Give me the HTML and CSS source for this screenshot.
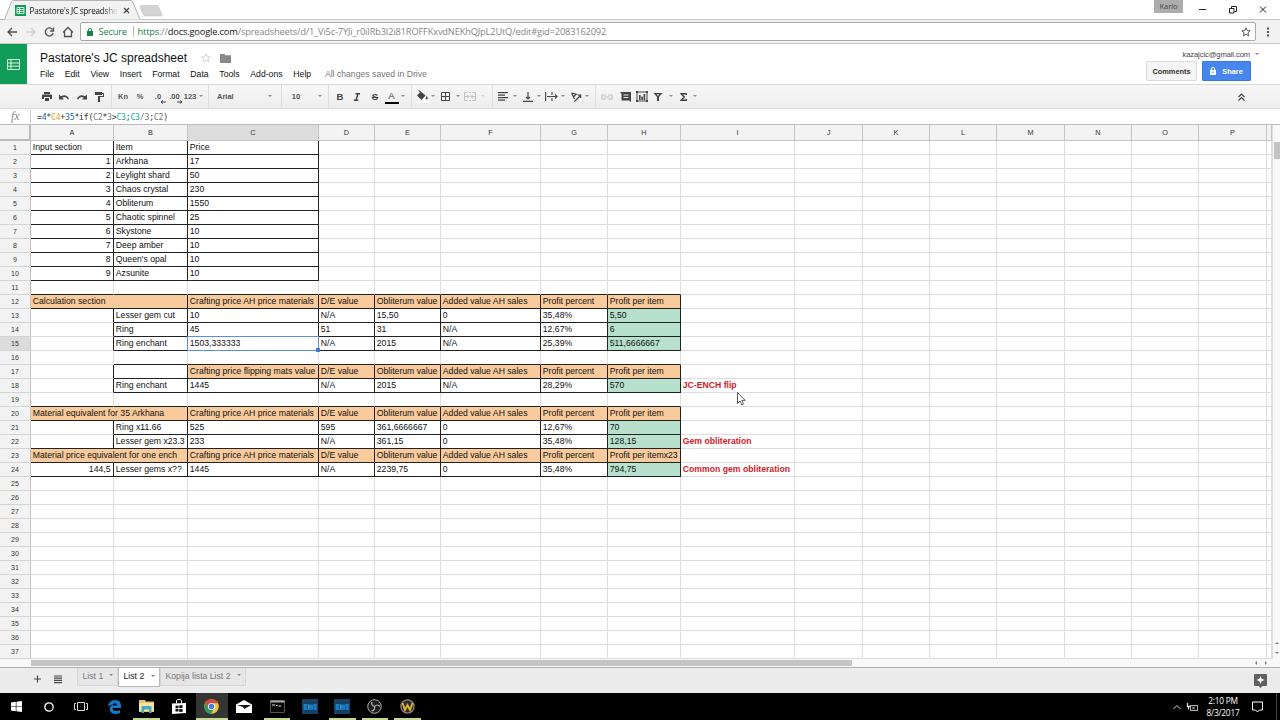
FILE: index.html
```html
<!DOCTYPE html>
<html lang="en">
<head>
<meta charset="utf-8">
<title>Pastatore's JC spreadsheet</title>
<link rel="stylesheet" href="styles.css">
</head>
<body>
<div class="screen">
  <header class="tabstrip">
    <svg class="tabshape" width="164" height="20" viewBox="0 0 164 20"><path d="M0 19.5H4.5L11.5 1.5Q12 .5 13.500 .5H130Q132 .5 132.500 1.500L140 19.500" fill="#f2f2f2" stroke="#b4b4b4"/><path d="M141 5.500h16q1 0 1.500 1l3.500 8q0 1.500-1 1.500h-15.500q-1.500 0-2-1l-3.500-8q0-1.500 1-1.500z" fill="#d2d2d2" stroke="#c6c6c6" stroke-width=".6"/></svg>
    <svg class="favicon" width="11" height="11" viewBox="0 0 11 11"><path fill="#119d57" d="M0 0h11v11H0z"/><path d="M2 2.500h7v6H2zM4.500 2.500v6M2 4.500h7M2 6.500h7" fill="none" stroke="#fff" stroke-width=".8"/></svg>
    <span class="tabtitle">Pastatore's JC spreadshe</span>
    <svg class="tabclose" width="7" height="7" viewBox="0 0 7 7"><path d="M1 1l5 5M6 1l-5 5" stroke="#444" stroke-width="1.200"/></svg>
    <span class="profile">Karlo</span>
    <svg class="winctl" width="80" height="12" viewBox="0 0 80 12"><g fill="none" stroke="#222"><path d="M4 6.500h7"/><path d="M34.500 5.500h4.500v4.500h-4.500zM36.500 5.500v-2h5v5h-2"/><path d="M65 3.500l6 6M71 3.500l-6 6"/></g></svg>
  </header>

  <div class="navbar">
    <svg class="navicons" width="80" height="22" viewBox="0 0 80 22"><g fill="none" stroke="#505050" stroke-width="1.300"><path d="M17 11H8M12 7l-4 4 4 4"/><path d="M26 11h9M31 7l4 4-4 4" stroke="#d0d0d0"/><path d="M52.500 8.500a4 4 0 1 0 .7 3.500"/><path d="M53.500 6.500v3.500H50"/><path d="M63 11.500l5-5 5 5M64.500 10.500v5h7v-5"/></g></svg>
    <div class="omnibox">
      <svg class="lock" width="6" height="8" viewBox="0 0 6 8"><path fill="#188048" d="M0 3h6v5H0z"/><path d="M1.300 3.500V2a1.700 1.500 0 0 1 3.400 0v1.500" fill="none" stroke="#188048"/></svg>
      <span class="secure">Secure</span>
      <span class="url"><b>https</b>://<i>docs.google.com</i>/spreadsheets/d/1_Vi5c-7YJi_r0iIRb3I2i81ROFFKxvdNEKhQJpL2UtQ/edit#gid=2083162092</span>
      <svg class="bookmark" width="10" height="10" viewBox="0 0 10 10"><path d="M5 .8l1.200 2.800 3 .3-2.300 2 .7 3L5 7.300 2.400 8.900l.7-3-2.300-2 3-.3z" fill="none" stroke="#555"/></svg>
    </div>
    <svg width="4" height="12" viewBox="0 0 4 12"><path fill="#555" d="M1 1.500h2v2H1zM1 5h2v2H1zM1 8.500h2v2H1z"/></svg>
  </div>

  <div class="dochead">
    <div class="logo"><svg width="13" height="11" viewBox="0 0 13 11"><path d="M.5.5h12v10H.5zM4 .5v10M.5 4h12M.5 7.200h12" fill="none" stroke="#d8f5e5"/></svg></div>
    <div class="docinfo">
      <div class="titlerow"><span class="doctitle">Pastatore's JC spreadsheet</span>
        <svg class="star" width="10" height="10" viewBox="0 0 10 10"><path d="M5 .7l1.200 3 3.200.2-2.500 2 .8 3.100L5 7.300 2.300 9l.8-3.100-2.500-2 3.200-.2z" fill="none" stroke="#c9c9c9" stroke-width=".8"/></svg>
        <svg class="folder" width="11" height="9" viewBox="0 0 11 9"><path fill="#8a8a8a" d="M0 0h4.500l1 1.200H11V9H0z"/></svg></div>
      <nav class="menus"><span>File</span><span>Edit</span><span>View</span><span>Insert</span><span>Format</span><span>Data</span><span>Tools</span><span>Add-ons</span><span>Help</span><span class="saved">All changes saved in Drive</span></nav>
    </div>
    <div class="account">
      <div class="mail">kazajcic@gmail.com <i class="caret"></i></div>
      <div class="buttons"><span class="btn">Comments</span><span class="btn share"><svg width="6" height="8" viewBox="0 0 6 8"><path fill="#fff" d="M0 3h6v5H0z"/><path d="M1.300 3V2a1.700 1.500 0 0 1 3.400 0v1" fill="none" stroke="#fff"/><circle cx="3" cy="5.300" r=".8" fill="#4285f4"/></svg>Share</span></div>
    </div>
  </div>

  <div class="toolbar">
    <span class="w17"><svg width="10" height="9" viewBox="0 0 10 9"><path fill="#444" d="M2 0h6v2H2zM1 2.500h8q1 0 1 1V7H8V5H2v2H0V3.500q0-1 1-1zM3 6h4v3H3z"/></svg></span>
    <span class="w18"><svg width="10" height="8" viewBox="0 0 10 8"><path fill="#444" d="M0 1.500v5h5L3.200 4.700Q7 2.500 9 6.500l1-.5Q7.500.5 2 3.300z"/></svg></span>
    <span class="w18"><svg width="10" height="8" viewBox="0 0 10 8"><path fill="#444" d="M10 1.500v5H5l1.800-1.800Q3 2.500 1 6.500L0 6Q2.500.5 8 3.300z"/></svg></span>
    <span class="w16"><svg width="9" height="10" viewBox="0 0 9 10"><path fill="#444" d="M0 0h7v3H0zM7 1h2v4H5v5H3V4h5V2H7z"/></svg></span>
    <span class="sep w9"></span>
    <span class="w14">Kn</span><span class="w20">%</span>
    <span class="w16 dec">.0<svg width="6" height="4" viewBox="0 0 6 4"><path d="M6 2H1M3 .5L1 2l2 1.500" fill="none" stroke="#444"/></svg></span><span class="w17 dec">.00<svg width="6" height="4" viewBox="0 0 6 4"><path d="M0 2h5M3 .5L5 2 3 3.500" fill="none" stroke="#444"/></svg></span>
    <span class="w14">123</span><span class="w7"><i class="caret"></i></span><span class="sep w9"></span>
    <span class="w53 font">Arial</span><span class="w8"><i class="caret"></i></span><span class="sep w15"></span>
    <span class="w14">10</span><span class="w13"></span><span class="w8"><i class="caret"></i></span><span class="sep w8"></span>
    <span class="w16 glyph">B</span>
    <span class="w18"><svg width="8" height="8" viewBox="0 0 8 8"><path d="M2.500.7H7M.8 7.300h4.500M5 .7L3 7.300" fill="none" stroke="#444" stroke-width="1.400"/></svg></span>
    <span class="w18 glyph strike">S</span>
    <span class="w15 glyph inkcolor">A</span><span class="w8"><i class="caret"></i></span><span class="sep w8"></span>
    <span class="w14"><svg width="13" height="13" viewBox="0 0 13 13"><path fill="#fff" d="M0 11h13v2H0z"/><path fill="#444" d="M3 0l6.500 5.500L5.500 10 1 5.500 4 2.500 2.300.8zM10.700 6q2 3 0 3.500-1.800-.5 0-3.500z"/></svg></span><span class="w8"><i class="caret"></i></span>
    <span class="w17"><svg width="9" height="9" viewBox="0 0 9 9"><path d="M.5.5h8v8h-8zM4.500.5v8M.5 4.500h8" fill="none" stroke="#444"/></svg></span><span class="w7"><i class="caret"></i></span>
    <span class="w18 faded"><svg width="12" height="9" viewBox="0 0 12 9"><path d="M3.500.5h-3v8h3M8.500.5h3v8h-3M5 .5h2M5 8.500h2M1 4.500h4M7 4.500h4M3.500 3L5 4.500 3.500 6M8.500 3L7 4.500 8.500 6" fill="none" stroke="#444"/></svg></span><span class="w8 faded"><i class="caret"></i></span><span class="sep w11"></span>
    <span class="w10"><svg width="10" height="9" viewBox="0 0 10 9"><path d="M0 .7h10M0 3.200h7M0 5.700h10M0 8.200h7" stroke="#444" stroke-width="1.200"/></svg></span><span class="w14"><i class="caret"></i></span>
    <span class="w11"><svg width="10" height="10" viewBox="0 0 10 10"><path d="M0 9.300h10M5 0v7M3 5l2 2 2-2" fill="none" stroke="#444" stroke-width="1.200"/></svg></span><span class="w12"><i class="caret"></i></span>
    <span class="w12"><svg width="13" height="9" viewBox="0 0 13 9"><path d="M.6 0v9M2 4.500h10M10 2.500l2 2-2 2M7 0v3M7 6v3" fill="none" stroke="#444" stroke-width="1.100"/></svg></span><span class="w12"><i class="caret"></i></span>
    <span class="w14"><svg width="11" height="10" viewBox="0 0 11 10"><path d="M.5 1l6 1.500M.5 1l3 6M5 2l-2.500 3M3.500 9.500l6-6M7 3.200h2.700V6" fill="none" stroke="#444" stroke-width="1.200"/></svg></span><span class="w8"><i class="caret"></i></span><span class="sep w9"></span>
    <span class="w14 faded"><svg width="12" height="6" viewBox="0 0 12 6"><path d="M5 1H1v4h4M7 1h4v4H7M3.500 3h5" fill="none" stroke="#444" stroke-width="1.200"/></svg></span>
    <span class="w22"><svg width="11" height="10" viewBox="0 0 11 10"><path fill="#444" d="M0 0h11v10L9 8.500H1.500V2z"/><path d="M3.500 3h5M3.500 5.500h5" stroke="#eee"/></svg></span>
    <span class="w11"><svg width="12" height="11" viewBox="0 0 12 11"><path d="M1 1h10v9H1z" fill="none" stroke="#444"/><path fill="#444" d="M0 0h2v2H0zM10 0h2v2h-2zM0 9h2v2H0zM10 9h2v2h-2zM3 4h1.600v5H3zM5.300 5.500h1.600V9H5.300zM7.600 3h1.600v6H7.600z"/></svg></span><span class="w5"></span>
    <span class="w12"><svg width="10" height="9" viewBox="0 0 10 9"><path d="M.5 1h9L6 5v4H4V5z" fill="#444"/><path fill="#eee" d="M3.500 2.200h3L5 4z"/></svg></span><span class="w13"><i class="caret"></i></span>
    <span class="w13"><svg width="7" height="8" viewBox="0 0 7 8"><path d="M6.500 2V.8H1.300L4.300 4l-3 3.200h5.200V6" fill="none" stroke="#444" stroke-width="1.500"/></svg></span><span class="w10"><i class="caret"></i></span>
    <span class="collapse"><svg width="7" height="8" viewBox="0 0 7 8"><path d="M.5 4l3-3 3 3M.5 7.500l3-3 3 3" fill="none" stroke="#444" stroke-width="1.200"/></svg></span>
  </div>

  <div class="formula"><span class="fx">fx</span><span class="expr">=<i class="num">4</i>*<i class="c4">C4</i>+<i class="num">35</i>*if(<i class="c2">C2</i>*<i class="c2">3</i>&gt;<i class="c3">C3</i>;<i class="c3">C3</i><i class="c2">/3</i>;<i class="c2">C2</i>)</span></div>

  <main class="sheetwrap">
    <div class="sheet" id="sheet"></div>
    <div class="vscroll"><i class="thumb"></i><i class="arrow up"></i><i class="arrow down"></i></div>
    <svg class="cursor" width="9" height="14" viewBox="0 0 9 14"><path d="M.5.5v11L3 9l1.800 4 1.700-.8L4.800 8.400h3.400z" fill="#fff" stroke="#333" stroke-width=".8"/></svg>
  </main>
  <div class="hscroll"><i class="thumb"></i><i class="arrow left"></i><i class="arrow right"></i></div>

  <footer class="sheetbar">
    <svg class="sheeticons" width="30" height="10" viewBox="0 0 30 10"><path d="M0 5h7M3.500 1.500v7" stroke="#444" stroke-width="1.100"/><path d="M20 2h8M20 4.200h8M20 6.400h8M20 8.600h8" stroke="#444" stroke-width="1.200"/></svg>
    <div class="stab one">List 1<i class="caret"></i></div><div class="stab on">List 2<i class="caret"></i></div><div class="stab three">Kopija lista List 2<i class="caret"></i></div>
    <svg class="explore" width="13" height="14" viewBox="0 0 13 14"><path fill="#606060" d="M1 0h11q1 0 1 1v10q0 1-1 1H8.500l-2 2-2-2H1q-1 0-1-1V1q0-1 1-1z"/><path fill="#fff" d="M6.500 2l1.200 2.800L10.500 6 7.700 7.200 6.500 10 5.300 7.200 2.500 6l2.800-1.200z"/></svg>
  </footer>

  <div class="taskbar">
    <span class="app"><svg width="11" height="11" viewBox="0 0 11 11"><path fill="#fff" d="M0 1.500l4.800-.7v4.400H0zM5.400.7L11 0v5.200H5.400zM0 5.800h4.800v4.400L0 9.500zM5.400 5.800H11V11l-5.600-.7z"/></svg></span>
    <span class="app"><svg width="10" height="10" viewBox="0 0 10 10"><circle cx="5" cy="5" r="4.200" fill="none" stroke="#fff" stroke-width="1.300"/></svg></span>
    <span class="app"><svg width="14" height="9" viewBox="0 0 14 9"><path d="M3.500.5h7v8h-7zM2 1.500H.5v6H2M12 1.500h1.500v6H12" fill="none" stroke="#ddd"/></svg></span>
    <span class="app"><svg width="13" height="14" viewBox="0 0 13 14"><path fill="#1479d0" d="M0 6.500Q1 0 7 0q6 0 6 6v2H4.500q.3 3 3.700 3 2 0 3.800-1v3q-2 1-4.500 1-5.500 0-5.700-5Q1.800 6 5 4.500q-3 .2-5 2zM4.600 5.500H9Q9 3 7 3 5 3 4.600 5.500z"/></svg></span>
    <span class="app run"><svg width="15" height="13" viewBox="0 0 15 13"><path fill="#e4c46a" d="M0 0h6l1 1.500h8V12H0z"/><path fill="#f7e3a0" d="M0 3h15v8H0z"/><path fill="#42a9c9" d="M2.500 7q0-1 1-1h8q1 0 1 1v6H10V9.500H5V13H2.500z"/></svg></span>
    <span class="app"><svg width="14" height="15" viewBox="0 0 14 15"><path fill="#fff" d="M0 4.500L14 4v10L0 15z"/><path d="M4.500 4V1.500q0-1 2.500-1t2.500 1V4" fill="none" stroke="#fff"/><path fill="#111" d="M3.500 6.700l3-.2v2.700h-3zM7.200 6.400l3.300-.3v3H7.200zM3.500 9.900h3v2.700l-3-.2zM7.200 9.900h3.300v3.200l-3.300-.4z"/></svg></span>
    <span class="app run active"><svg width="15" height="15" viewBox="0 0 15 15"><circle cx="7.500" cy="7.500" r="7.300" fill="#eec63c"/><path fill="#d8483b" d="M1.200 4A7.300 7.300 0 0 1 14 4.200H7.500L4.500 9z"/><path fill="#2f9b58" d="M1.200 4A7.300 7.300 0 0 0 7 14.800L10 9.500 5 9.500z"/><circle cx="7.500" cy="7.500" r="3.500" fill="#fff"/><circle cx="7.500" cy="7.500" r="2.700" fill="#3f7fe0"/></svg></span>
    <span class="app"><svg width="16" height="13" viewBox="0 0 16 13"><path fill="#fff" d="M0 4.500L8 0l8 4.500V13H0z"/><path fill="#111" d="M1 5h14L8.500 9 7 7z"/></svg></span>
    <span class="app run"><svg width="15" height="13" viewBox="0 0 15 13"><path fill="#080808" stroke="#777" stroke-width=".7" d="M.5.5h14v12H.5z"/><path fill="#aaa" d="M.5.5h14V2.500H.5z"/><path d="M2 5h3M6 5.500h1.500M8.500 6H11" stroke="#ddd"/></svg></span>
    <span class="app"><svg width="16" height="15" viewBox="0 0 16 15"><path fill="#173f63" d="M0 0h16v15H0z"/><path fill="#145b91" d="M1 5h14v6H1z"/><path d="M2 6h3M2 8h2.500M2 10h3M6.500 5.500v5M8 6v4.500M10 6v4.500M12 6h2.500M12 8h2M12 10h2.500" stroke="#2b9be0"/></svg></span>
    <span class="app run"><svg width="16" height="15" viewBox="0 0 16 15"><path fill="#173f63" d="M0 0h16v15H0z"/><path fill="#145b91" d="M1 5h14v6H1z"/><path d="M2 6h3M2 8h2.500M2 10h3M6.500 5.500v5M8 6v4.500M10 6v4.500M12 6h2.500M12 8h2M12 10h2.500" stroke="#2b9be0"/></svg></span>
    <span class="app run"><svg width="15" height="15" viewBox="0 0 15 15"><circle cx="7.500" cy="7.500" r="6.800" fill="#1d1d1d" stroke="#aaa"/><path d="M7.500 7.500Q4 6.500 5 3M7.500 7.500q3-3 5.500 0M7.500 7.500q1 3.500-3 4.500" fill="none" stroke="#bbb" stroke-width="1.200"/></svg></span>
    <span class="app run"><svg width="15" height="15" viewBox="0 0 15 15"><circle cx="7.500" cy="7.500" r="6.600" fill="#2c2c30" stroke="#8a8578" stroke-width="1.300"/><path d="M2.500 4l2.500 7 2.500-5L10 11l2.500-7" fill="none" stroke="#e5b62e" stroke-width="1.800"/></svg></span>
    <svg class="tray" width="26" height="12" viewBox="0 0 26 12"><g fill="none" stroke="#ddd"><path d="M.5 8L4 4.500 7.500 8"/><path d="M17.500 4.500h7v5h-7zM19 5.500l3 3M22 5.500l-3 3" stroke-width=".8"/><path d="M14.500 2v3.500h3M15.500 5.500v3" stroke-width="1.300"/></g></svg>
    <div class="clock"><div>2:10 PM</div><div>8/3/2017</div></div>
    <svg class="notify" width="11" height="12" viewBox="0 0 11 12"><path d="M.5 1h10v8H7.500L5.500 11l-2-2h-3z" fill="none" stroke="#fff"/></svg>
    <span class="peek"></span>
  </div>
</div>
<script src="sheet.js"></script>
</body>
</html>
```
FILE: styles.css
```css
*{box-sizing:border-box}
body{margin:0;background:#fff;font-family:"Liberation Sans",Arial,sans-serif;font-size:8.67px;color:#111}
i,b{font-style:normal;font-weight:normal}
svg{display:block;flex:none}
.screen{width:1280px;height:720px;overflow:hidden;display:flex;flex-direction:column;position:relative}
.screen>*{flex:none}
.caret{display:block;border:2px solid transparent;border-top:2.5px solid #888;border-bottom:0;width:4px;height:2.5px;flex:none}

.tabstrip{height:20px;display:flex;align-items:center;position:relative;border-bottom:1px solid #c6c6c6;font-family:"Open Sans","Noto Sans",sans-serif}
.tabshape{position:absolute;left:0;top:0}
.favicon,.tabtitle,.tabclose{position:relative;margin-top:1px}
.favicon{margin-left:15px}
.tabtitle{margin-left:3.500px;width:88px;font-size:8.200px;letter-spacing:-.25px;white-space:nowrap;overflow:hidden;-webkit-mask-image:linear-gradient(90deg,#000 82%,transparent)}
.tabclose{margin-left:5px}
.profile{margin-left:auto;align-self:flex-start;width:29px;height:13px;background:#adadad;color:#444;font-size:7.500px;line-height:12px;text-align:center}
.winctl{width:80px;margin-left:12px;margin-right:5px;margin-bottom:1px}

.navbar{height:24px;background:#f2f2f2;border-bottom:1px solid #c9c9c9;display:flex;align-items:center;font-family:"Open Sans","Noto Sans",sans-serif}
.omnibox{width:1176px;height:19px;background:#fff;border:1px solid #a8a8a8;border-radius:2px;display:flex;align-items:center;font-size:9.300px;margin-right:10px}
.lock{margin-left:6px}
.secure{margin-left:5.500px;width:28px;color:#188048;letter-spacing:-.2px}
.url{margin-left:6px;padding-left:4px;border-left:1px solid #bbb;line-height:11px;color:#858585;white-space:nowrap;letter-spacing:-.18px}
.url b{color:#188048}
.url i{color:#111}
.bookmark{margin-left:auto;margin-right:4px}

.dochead{height:40px;display:flex}
.logo{width:27px;background:#119d57;display:flex;align-items:center;justify-content:center}
.docinfo{padding:6px 0 0 13px}
.titlerow{display:flex;align-items:center;height:16px}
.doctitle{font-size:12px;width:148px;white-space:nowrap}
.star{margin-left:13px}
.folder{margin-left:9px}
.menus{display:flex;gap:10.750px;margin-top:3px;line-height:10px;white-space:nowrap}
.menus .saved{margin-left:3px;color:#777}
.account{margin-left:auto;width:134px}
.mail{display:flex;justify-content:flex-end;align-items:center;margin:5px 21px 0 0;height:10px;font-size:7.600px;letter-spacing:-.1px;color:#444}
.mail .caret{margin-left:5px}
.buttons{display:flex;gap:5px;margin-top:2px}
.btn{width:51px;height:20px;border:1px solid #dadada;border-radius:1px;background:#f5f5f5;font-weight:bold;font-size:7.400px;display:flex;align-items:center;justify-content:center;color:#333}
.share{width:49px;background:#4787ed;border-color:#3a79e0;color:#fff;gap:6px}

.toolbar{height:25px;border-top:1px solid #d9d9d9;border-bottom:1px solid #d9d9d9;background:linear-gradient(#f7f7f7,#ededed);display:flex;align-items:center;padding-left:38px;font-size:7.500px;font-weight:bold;color:#555}
.toolbar>span{display:flex;align-items:center;justify-content:center;height:23px;flex:none;position:relative}
.w5{width:5px}.w7{width:7px}.w8{width:8px}.w9{width:9px}.w10{width:10px}.w11{width:11px}.w12{width:12px}.w13{width:13px}.w14{width:14px}.w15{width:15px}.w16{width:16px}.w17{width:17px}.w18{width:18px}.w20{width:20px}.w22{width:22px}.w53{width:53px}
.sep::before{content:"";width:1px;height:23px;background:#dcdcdc}
.toolbar .font{justify-content:flex-start;padding-left:4px}
.dec svg{position:absolute;right:0;bottom:4px}
.glyph{font-size:9.500px;color:#444}
.strike{text-decoration:line-through}
.inkcolor{font-weight:normal;padding-bottom:2px}
.inkcolor::after{content:"";position:absolute;left:1px;right:0;bottom:4px;height:2px;background:#000}
.faded{opacity:.28}
.toolbar .collapse{margin-left:auto;margin-right:35px}

.formula{height:15px;display:flex;align-items:center}
.fx{width:31px;padding-left:11px;font:italic 12px/13px "Liberation Serif",serif;color:#888;border-right:1px solid #ccc}
.expr{padding-left:6px;font:8.200px/12px "DejaVu Sans Mono",monospace;letter-spacing:-.26px;color:#333;white-space:pre}
.num{color:#1668b8}.c4{color:#e6a51d}.c3{color:#20b0a0}.c2{color:#777}

.sheetwrap{display:flex;height:535px;position:relative;border-top:1px solid #bcbcbc}
.sheet{width:1272px;display:grid;grid-template-columns:31px 83px 74px 131px 56px 66px 100px 67px 73px 114px 68px 67px 67px 68px 67px 67px 68px 5px;grid-template-rows:16px repeat(37,14px);overflow:hidden}
.sheet>div{border-right:1px solid #dedede;border-bottom:1px solid #dedede;padding:0 2.500px 0 1.800px;line-height:13.500px;white-space:nowrap;position:relative;font-size:8.670px}
.sheet>.hd{background:#f3f3f3;border-color:#c4c4c4;text-align:center;font-size:7.300px;line-height:15px;color:#333;padding:0}
.sheet>.rh{line-height:14px;font-size:7px;border-bottom-color:#d4d4d4}
.sheet>.corner{border-right:2px solid #bbb;border-bottom:2px solid #bbb}
.sheet>.sel{background:#dcdcdc}
.sheet>.bb{border-bottom-color:#222}
.sheet>.br{border-right-color:#222}
.sheet>.orange{background:#f9cb9c}
.sheet>.green{background:#b7e1cd}
.sheet>.right{text-align:right}
.sheet>.red{color:#d32027;font-weight:bold}
.sheet>.span2{grid-column:span 2}
.picked::before{content:"";position:absolute;left:-1px;top:-1px;right:-1px;bottom:-1px;border:1px solid #5a8fe0}
.picked::after{content:"";position:absolute;right:-2px;bottom:-2px;width:4px;height:4px;background:#4277d8;z-index:1}
.vscroll{width:8px;background:#f8f8f8;border-left:1px solid #ddd;display:flex;flex-direction:column;align-items:center}
.vscroll .thumb{margin-top:17px;width:6px;height:17px;background:#c3c3c3}
.arrow{border:2px solid transparent;width:4px;height:4px}
.up{border-bottom-color:#777;margin-top:auto}
.down{border-top-color:#777;margin:8px 0 3px}
.cursor{position:absolute;left:737px;top:267px}
.hscroll{height:9px;background:#f8f8f8;border-bottom:1px solid #b0b0b0;display:flex;align-items:center;padding-left:31px}
.hscroll .thumb{width:821px;height:6px;background:#c5c5c5}
.left{margin-left:auto;border-right-color:#777}
.right.arrow{border-left-color:#777;margin:0 11px 0 8px}

.sheetbar{height:25px;background:#ececec;display:flex;color:#777}
.sheeticons{margin:6px 10px 0 34px}
.stab{height:18px;border:1px solid #d6d6d6;border-top:0;background:#e6e6e6;display:flex;align-items:center;justify-content:space-between;padding:0 4px 2px 4.500px;white-space:nowrap}
.one{width:41px;margin-left:3px}
.stab.on{width:42px;height:19px;background:#fff;color:#222;border-color:#bbb}
.three{width:86px}
.explore{margin:6px 13px 0 auto}

.taskbar{height:27px;background:#000;display:flex;align-items:center;color:#fff}
.app{width:32.600px;height:27px;display:flex;align-items:center;justify-content:center;position:relative;flex:none}
.run::after{content:"";position:absolute;left:3px;right:3px;bottom:0;height:2px;background:#c4da92}
.active{background:#353535}
.active::after{left:0;right:0}
.tray{margin-left:auto;margin-right:-1px}
.clock{width:50px;text-align:center;font:8.300px/12px "Open Sans","Noto Sans",sans-serif;letter-spacing:-.2px;margin-right:4px}
.notify{margin-right:13px}
.peek{width:4px;height:27px;border-left:1px solid #444}
```
FILE: sheet.js
```js
const cols = 'ABCDEFGHIJKLMNOP'.split('');
const heads = ['D/E value', 'Obliterum value', 'Added value AH sales', 'Profit percent'];
const ah = 'Crafting price AH price materials';
const rows = {
  1: ['Input section', 'Item', 'Price'],
  2: [1, 'Arkhana', 17],
  3: [2, 'Leylight shard', 50],
  4: [3, 'Chaos crystal', 230],
  5: [4, 'Obliterum', 1550],
  6: [5, 'Chaotic spinnel', 25],
  7: [6, 'Skystone', 10],
  8: [7, 'Deep amber', 10],
  9: [8, "Queen's opal", 10],
  10: [9, 'Azsunite', 10],
  12: ['Calculation section', '', ah, ...heads, 'Profit per item'],
  13: ['', 'Lesser gem cut', 10, 'N/A', '15,50', 0, '35,48%', '5,50'],
  14: ['', 'Ring', 45, 51, 31, 'N/A', '12,67%', 6],
  15: ['', 'Ring enchant', '1503,333333', 'N/A', 2015, 'N/A', '25,39%', '511,6666667'],
  17: ['', '', 'Crafting price flipping mats value', ...heads, 'Profit per item'],
  18: ['', 'Ring enchant', 1445, 'N/A', 2015, 'N/A', '28,29%', 570, 'JC-ENCH flip'],
  20: ['Material equivalent for 35 Arkhana', '', ah, ...heads, 'Profit per item'],
  21: ['', 'Ring x11.66', 525, 595, '361,6666667', 0, '12,67%', 70],
  22: ['', 'Lesser gem x23.3', 233, 'N/A', '361,15', 0, '35,48%', '128,15', 'Gem obliteration'],
  23: ['Material price equivalent for one ench', '', ah, ...heads, 'Profit per itemx23'],
  24: ['144,5', 'Lesser gems x??', 1445, 'N/A', '2239,75', 0, '35,48%', '794,75', 'Common gem obliteration']
};
const merged = [12, 20, 23];
const sheet = document.getElementById('sheet');

function add(text, cls) {
  const el = document.createElement('div');
  el.className = cls;
  el.textContent = text;
  sheet.append(el);
}

add('', 'hd corner');
cols.forEach(c => add(c, 'hd' + (c === 'C' ? ' sel' : '')));
add('', 'hd');

for (let r = 1; r <= 37; r++) {
  add(r, 'hd rh' + (r === 15 ? ' sel' : ''));
  const data = rows[r] || [];
  const header = merged.includes(r);
  const table = r >= 12 && data.length > 0;
  for (let c = 0; c <= 16; c++) {
    if (header && c === 1) continue;
    const cls = ['cell'];
    if (header && c === 0) cls.push('span2');
    if (r <= 10 && c <= 2) cls.push('bb', 'br');
    if (table && c <= 7) {
      cls.push('br');
      if (c > 0 || header || r === 22 || r === 24) cls.push('bb');
    }
    if ((r === 11 || r === 19) && c <= 7) cls.push('bb');
    if (r === 16 && c >= 1 && c <= 7) cls.push('bb');
    if ((header && c <= 7) || (r === 17 && c >= 2 && c <= 7)) cls.push('orange');
    else if (table && c === 7) cls.push('green');
    if (c === 0 && ((r >= 2 && r <= 10) || r === 24)) cls.push('right');
    if (c === 8) cls.push('red');
    if (r === 15 && c === 2) cls.push('picked');
    add(data[c] === undefined ? '' : data[c], cls.join(' '));
  }
}
```
